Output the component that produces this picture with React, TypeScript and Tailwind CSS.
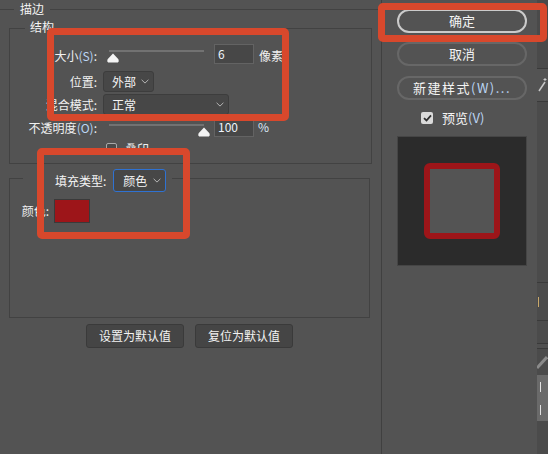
import React from "react";

function Chevron() {
  return (
    <svg width="8" height="5" viewBox="0 0 8 5" className="block shrink-0">
      <path d="M0.6 0.8 L4 4.1 L7.4 0.8" fill="none" stroke="#b5b5b5" strokeWidth="1" />
    </svg>
  );
}

function Thumb() {
  return (
    <svg width="12" height="10" viewBox="0 0 12 10" className="block">
      <path
        d="M6 0.4 L11.2 6.1 Q12 7.1 11.6 8.4 Q11.1 9.6 9.6 9.6 H2.4 Q0.9 9.6 0.4 8.4 Q0 7.1 0.8 6.1 Z"
        fill="#f4f4f4"
      />
    </svg>
  );
}

function Hint({ children }: { children: React.ReactNode }) {
  return <span className="text-[#bcd6f3]">{children}</span>;
}

export default function App() {
  return (
    <div className="relative w-[548px] h-[454px] overflow-hidden bg-[#535353] flex font-['Noto_Sans_CJK_SC',sans-serif] text-[12px] leading-[14px] text-[#f1f1f1]">
      {/* left: stroke settings */}
      <div className="w-[382px] shrink-0 border-r border-[#404040] flex flex-col">
        <div className="h-[18px] flex items-center">
          <div className="w-[14px] h-px bg-[#424242]" />
          <span className="px-[6px] text-[#f4f4f4]">描边</span>
          <div className="flex-1 h-px bg-[#424242]" />
        </div>

        {/* 结构 */}
        <div className="relative mt-[10px] ml-[9px] w-[363px] h-[136px] border border-[#424242] pt-[15px]">
          <span className="absolute left-[15px] top-[-8px] px-[5px] bg-[#535353] leading-[12px] text-[#f4f4f4]">结构</span>

          <div className="flex items-center h-[20px]">
            <div className="w-[87px] shrink-0 text-right mt-[4px]">
              大小<Hint>(S)</Hint>:
            </div>
            <div className="relative ml-[12px] w-[95px] h-full">
              <div className="absolute left-0 right-0 top-[6px] h-[2px] bg-[#727272]" />
              <div className="absolute left-[-2px] top-[9px]">
                <Thumb />
              </div>
            </div>
            <div className="ml-[10px] w-[40px] h-[20px] bg-[#474747] border border-[#636363] flex items-center pl-[3px] text-[#eef4fb]">6</div>
            <span className="ml-[5px] mt-[4px]">像素</span>
          </div>

          <div className="flex items-center h-[21px] mt-[7px]">
            <div className="w-[87px] shrink-0 text-right">位置:</div>
            <div className="ml-[6px] w-[51px] h-[21px] rounded-[3px] bg-[#474747] border border-[#3d3d3d] flex items-center justify-between pl-[8px] pr-[4px] text-[#f5f5f5]">
              <span>外部</span>
              <Chevron />
            </div>
          </div>

          <div className="flex items-center h-[21px] mt-[2px]">
            <div className="w-[87px] shrink-0 text-right">混合模式:</div>
            <div className="ml-[6px] w-[126px] h-[21px] rounded-[3px] bg-[#474747] border border-[#3d3d3d] flex items-center justify-between pl-[8px] pr-[4px] text-[#f5f5f5]">
              <span>正常</span>
              <Chevron />
            </div>
          </div>

          <div className="flex items-center h-[20px] mt-[2px]">
            <div className="w-[87px] shrink-0 text-right mt-[2px]">
              不透明度<Hint>(O)</Hint>:
            </div>
            <div className="relative ml-[12px] w-[95px] h-full">
              <div className="absolute left-0 right-0 top-[7px] h-[2px] bg-[#727272]" />
              <div className="absolute left-[89px] top-[10px]">
                <Thumb />
              </div>
            </div>
            <div className="ml-[10px] w-[40px] h-[20px] bg-[#474747] border border-[#636363] flex items-center pl-[3px] text-[#eef4fb]">100</div>
            <span className="ml-[4px] text-[#dce8f5]">%</span>
          </div>

          <div className="flex items-center h-[12px] mt-[5px]">
            <div className="w-[87px] shrink-0" />
            <div className="ml-[9px] w-[11px] h-[11px] rounded-[2px] border border-[#a9a9a9] bg-[#4a4a4a]" />
            <span className="ml-[8px] mt-[2px]">叠印</span>
          </div>
        </div>

        {/* 填充类型 */}
        <div className="relative mt-[14px] ml-[9px] w-[361px] h-[140px] border border-[#424242] pt-[20px]">
          <div className="absolute left-[13px] top-[-10px] pl-[32px] pr-[6px] bg-[#535353] flex items-center h-[23px]">
            <span className="text-[#f4f4f4]">填充类型:</span>
            <div className="ml-[7px] w-[53px] h-[23px] rounded-[3px] bg-[#474747] border border-[#2f72d2] flex items-center justify-between pl-[9px] pr-[4px] text-[#f5f5f5]">
              <span>颜色</span>
              <Chevron />
            </div>
          </div>

          <div className="flex items-center h-[24px]">
            <div className="w-[39px] shrink-0 text-right">颜色:</div>
            <div className="ml-[5px] w-[36px] h-[24px] bg-[#9d1519] border border-[#3a3a3a]" />
          </div>
        </div>

        <div className="ml-[9px] w-[361px] mt-[6px] flex justify-center gap-[11px]">
          <div className="w-[98px] h-[24px] rounded-[3px] bg-[#454545] border border-[#3a3a3a] flex items-center justify-center text-[#f2f2f2]">设置为默认值</div>
          <div className="w-[98px] h-[24px] rounded-[3px] bg-[#454545] border border-[#3a3a3a] flex items-center justify-center text-[#f2f2f2]">复位为默认值</div>
        </div>
      </div>

      {/* right: actions and preview */}
      <div className="w-[155px] shrink-0 pl-[15px] pt-[9px] flex flex-col text-[13px] leading-[16px] text-[#f4f4f4]">
        <div className="w-[130px] h-[24px] rounded-full border-2 border-[#cbcbcb] flex items-center justify-center">确定</div>
        <div className="mt-[9px] w-[130px] h-[24px] rounded-full border-2 border-[#676767] flex items-center justify-center">取消</div>
        <div className="mt-[10px] w-[130px] h-[24px] rounded-full border-2 border-[#676767] flex items-center justify-center tracking-[1.5px]">
          新建样式<Hint>(W)...</Hint>
        </div>
        <div className="mt-[12px] h-[12px] flex items-center">
          <div className="ml-[24px] w-[12px] h-[12px] rounded-[2px] bg-[#dadada] flex items-center justify-center">
            <svg width="9" height="8" viewBox="0 0 9 8">
              <path d="M1 4.2 L3.5 6.5 L8 1.4" fill="none" stroke="#2e2e2e" strokeWidth="1.8" />
            </svg>
          </div>
          <span className="ml-[9px]">
            预览<Hint>(V)</Hint>
          </span>
        </div>
        <div className="mt-[12px] w-[130px] h-[130px] bg-[#2b2b2b] border border-[#454545] flex items-center justify-center">
          <div className="w-[76px] h-[76px] rounded-[6px] border-[6px] border-[#9d1519] bg-[#545454]" />
        </div>
      </div>

      {/* neighbouring panel edge */}
      <div className="w-[11px] shrink-0 flex flex-col">
        <div className="h-[68px] bg-[#4a4a4a]" />
        <div className="h-px bg-[#3a3a3a]" />
        <div className="h-[32px] bg-[#535353] flex items-center justify-center">
          <svg width="9" height="14" viewBox="0 0 9 14">
            <path d="M1 13 L7 4" stroke="#c8c8c8" strokeWidth="1.5" />
            <path d="M7 0 V3 M5.5 1.5 H8.5" stroke="#c8c8c8" strokeWidth="1" />
          </svg>
        </div>
        <div className="h-px bg-[#3a3a3a]" />
        <div className="h-[180px] bg-[#4b4b4b]" />
        <div className="h-px bg-[#3a3a3a]" />
        <div className="h-[37px] bg-[#4b4b4b] flex items-center">
          <div className="ml-[1px] w-px h-[10px] bg-[#c9a86a]" />
        </div>
        <div className="h-px bg-[#3a3a3a]" />
        <div className="h-[22px] bg-[#4b4b4b]" />
        <div className="h-px bg-[#3a3a3a]" />
        <div className="h-[4px] bg-[#505050]" />
        <div className="h-px bg-[#3a3a3a]" />
        <div className="h-[26px] bg-[#4b4b4b] flex items-center">
          <svg width="11" height="14" viewBox="0 0 11 14">
            <path d="M0 13 L10 2" stroke="#8a8a8a" strokeWidth="3" />
          </svg>
        </div>
        <div className="h-[46px] bg-[#6a6a6a] flex flex-col justify-around pl-[1px]">
          <div className="w-[3px] h-[10px] border-r border-[#e0e0e0]" />
          <div className="w-[3px] h-[10px] border-r border-[#e0e0e0]" />
        </div>
        <div className="flex-1 bg-[#4b4b4b]" />
      </div>

      {/* red annotation frames */}
      <div className="pointer-events-none absolute left-[47px] top-[28px] w-[242px] h-[93px] border-[7px] border-[#d8482c] rounded-[5px]" />
      <div className="pointer-events-none absolute left-[37px] top-[148px] w-[153px] h-[91px] border-[7px] border-[#d8482c] rounded-[5px]" />
      <div className="pointer-events-none absolute left-[378px] top-[3px] w-[169px] h-[39px] border-[7px] border-[#d8482c] rounded-[5px]" />
    </div>
  );
}
